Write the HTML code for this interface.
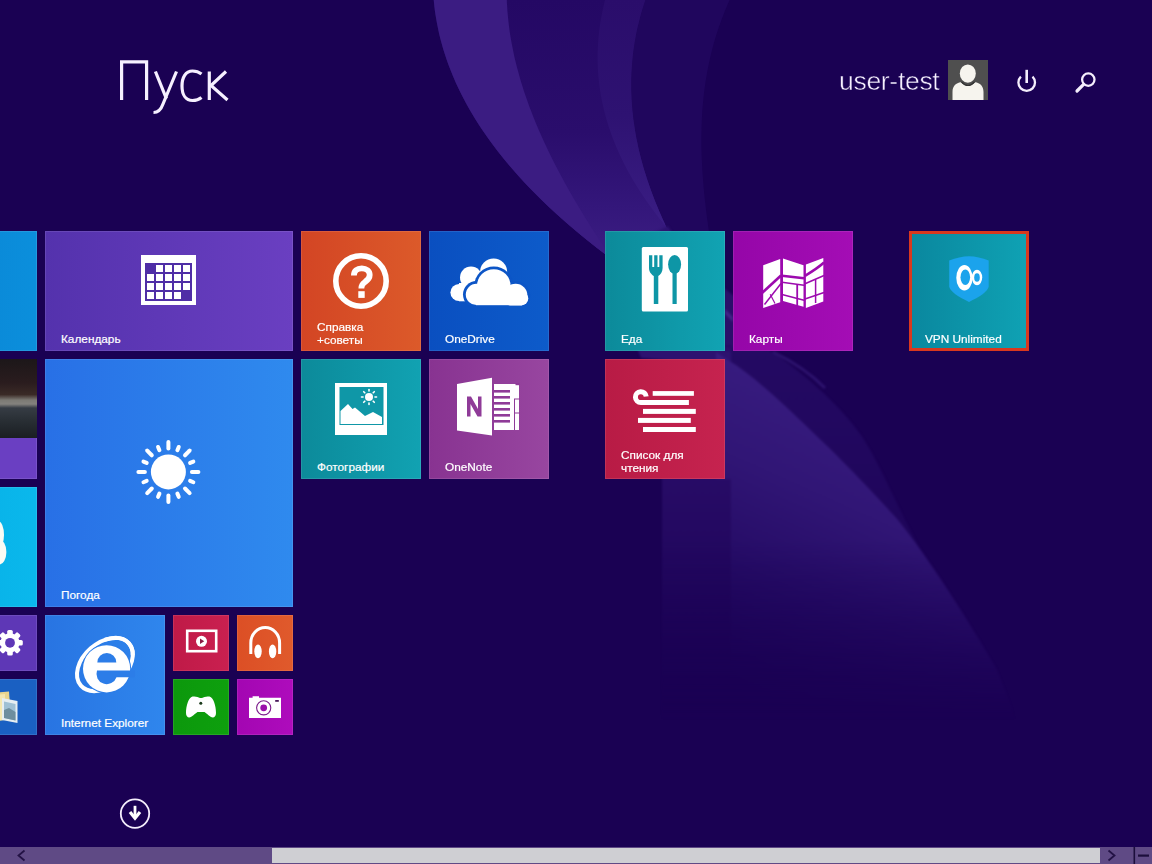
<!DOCTYPE html>
<html><head><meta charset="utf-8">
<style>
html,body{margin:0;padding:0;width:1152px;height:864px;overflow:hidden;background:#1a0153;}
body{position:relative;font-family:"Liberation Sans",sans-serif;}
.bg{position:absolute;left:0;top:0;width:1152px;height:864px;}
.t{position:absolute;overflow:hidden;box-sizing:border-box;box-shadow:inset 0 0 0 1px rgba(255,255,255,0.10);}
.lbl{position:absolute;left:16px;color:#fff;font-size:11.8px;line-height:13px;white-space:nowrap;-webkit-text-stroke:0.2px #fff;}
.ic{position:absolute;left:0;top:0;}
</style></head><body>
<svg width="0" height="0" style="position:absolute;left:0;top:0">
 <defs>
  <linearGradient id="fadev" gradientUnits="userSpaceOnUse" x1="0" y1="540" x2="0" y2="720"><stop offset="0" stop-color="#fff"/><stop offset="1" stop-color="#000"/></linearGradient>
  <mask id="lowmask" maskUnits="userSpaceOnUse" x="0" y="0" width="1152" height="864"><rect x="0" y="0" width="1152" height="864" fill="url(#fadev)"/></mask>
  <linearGradient id="lowg" gradientUnits="userSpaceOnUse" x1="850" y1="400" x2="720" y2="690">
   <stop offset="0" stop-color="#381c80"/>
   <stop offset="0.3" stop-color="#311676"/>
   <stop offset="0.6" stop-color="#260c67"/>
   <stop offset="0.85" stop-color="#1e055b"/>
   <stop offset="1" stop-color="#1a0153"/>
  </linearGradient>
  <linearGradient id="lowo" gradientUnits="userSpaceOnUse" x1="0" y1="350" x2="0" y2="700">
   <stop offset="0" stop-color="#240a63"/>
   <stop offset="1" stop-color="#1a0153"/>
  </linearGradient>
  <linearGradient id="lowf" gradientUnits="userSpaceOnUse" x1="0" y1="470" x2="0" y2="700">
   <stop offset="0" stop-color="#280c67"/>
   <stop offset="0.4" stop-color="#22075f"/>
   <stop offset="1" stop-color="#1a0153"/>
  </linearGradient>
 </defs>
</svg>
<svg class="bg" width="1152" height="864" viewBox="0 0 1152 864" style="filter:blur(0.6px)">

 <g>
  <linearGradient id="a2g" gradientUnits="userSpaceOnUse" x1="0" y1="0" x2="0" y2="240"><stop offset="0" stop-color="#240864"/><stop offset="0.55" stop-color="#2a0d6c"/><stop offset="0.85" stop-color="#33167a"/><stop offset="1" stop-color="#391b80"/></linearGradient>
  <path d="M647.0,-5.0 L645.6,-1.0 L644.3,3.0 L643.0,7.0 L641.8,11.0 L640.6,15.0 L639.6,19.0 L638.6,23.0 L637.6,27.0 L636.7,31.0 L635.9,35.0 L635.2,39.0 L634.5,43.0 L633.9,47.0 L633.3,51.0 L632.8,55.0 L632.4,59.0 L632.1,63.0 L631.8,67.0 L631.5,71.0 L631.3,75.0 L631.2,79.0 L631.2,83.0 L631.2,87.0 L631.2,91.0 L631.4,95.0 L631.5,99.0 L631.8,103.0 L632.1,107.0 L632.4,111.0 L632.9,115.0 L633.3,119.0 L633.9,123.0 L634.5,127.0 L635.1,131.0 L635.8,135.0 L636.5,139.0 L637.4,143.0 L638.2,147.0 L639.1,151.0 L640.1,155.0 L641.1,159.0 L642.2,163.0 L643.3,167.0 L644.5,171.0 L645.8,175.0 L647.0,179.0 L648.4,183.0 L649.8,187.0 L651.2,191.0 L652.7,195.0 L654.2,199.0 L655.8,203.0 L657.5,207.0 L659.1,211.0 L660.9,215.0 L662.6,219.0 L664.5,223.0 L666.3,227.0 L668.3,231.0 L670.2,235.0 L672.2,239.0 L674.3,243.0 L676.4,247.0 L678.5,251.0 L680.7,255.0 L682.9,259.0 L685.2,263.0 L687.5,267.0 L689.9,271.0 L692.3,275.0 L694.7,279.0 L697.2,283.0 L699.8,287.0 L702.3,291.0 L704.9,295.0 L707.6,299.0 L708.2,300.0 L720.1,300.0 L720.0,299.0 L719.3,295.0 L718.6,291.0 L717.9,287.0 L717.2,283.0 L716.6,279.0 L715.9,275.0 L715.2,271.0 L714.5,267.0 L713.9,263.0 L713.2,259.0 L712.6,255.0 L711.9,251.0 L711.3,247.0 L710.7,243.0 L710.1,239.0 L709.5,235.0 L708.9,231.0 L708.3,227.0 L707.8,223.0 L707.2,219.0 L706.7,215.0 L706.2,211.0 L705.7,207.0 L705.3,203.0 L704.8,199.0 L704.4,195.0 L704.0,191.0 L703.6,187.0 L703.3,183.0 L703.0,179.0 L702.7,175.0 L702.4,171.0 L702.2,167.0 L702.0,163.0 L701.8,159.0 L701.6,155.0 L701.5,151.0 L701.4,147.0 L701.4,143.0 L701.4,139.0 L701.4,135.0 L701.5,131.0 L701.6,127.0 L701.7,123.0 L701.9,119.0 L702.1,115.0 L702.3,111.0 L702.6,107.0 L703.0,103.0 L703.4,99.0 L703.8,95.0 L704.3,91.0 L704.8,87.0 L705.4,83.0 L706.0,79.0 L706.7,75.0 L707.4,71.0 L708.2,67.0 L709.0,63.0 L709.9,59.0 L710.8,55.0 L711.8,51.0 L712.8,47.0 L713.9,43.0 L715.1,39.0 L716.3,35.0 L717.6,31.0 L718.9,27.0 L720.4,23.0 L721.8,19.0 L723.4,15.0 L724.9,11.0 L726.6,7.0 L728.3,3.0 L730.1,-1.0 L732.0,-5.0 Z" fill="#20065d"/>
  <path d="M433.3,-5.0 L433.6,-1.0 L434.0,3.0 L434.4,7.0 L434.9,11.0 L435.5,15.0 L436.2,19.0 L436.9,23.0 L437.7,27.0 L438.5,31.0 L439.4,35.0 L440.4,39.0 L441.5,43.0 L442.6,47.0 L443.8,51.0 L445.1,55.0 L446.4,59.0 L447.8,63.0 L449.3,67.0 L450.9,71.0 L452.5,75.0 L454.2,79.0 L455.9,83.0 L457.8,87.0 L459.7,91.0 L461.7,95.0 L463.8,99.0 L465.9,103.0 L468.1,107.0 L470.4,111.0 L472.8,115.0 L475.2,119.0 L477.7,123.0 L480.3,127.0 L483.0,131.0 L485.8,135.0 L488.6,139.0 L491.5,143.0 L494.5,147.0 L497.5,151.0 L500.7,155.0 L503.9,159.0 L507.2,163.0 L510.6,167.0 L514.1,171.0 L517.6,175.0 L521.2,179.0 L524.9,183.0 L528.7,187.0 L532.6,191.0 L536.6,195.0 L540.6,199.0 L544.7,203.0 L548.9,207.0 L553.2,211.0 L557.6,215.0 L562.1,219.0 L566.6,223.0 L571.3,227.0 L576.0,231.0 L580.8,235.0 L585.7,239.0 L590.7,243.0 L595.7,247.0 L600.9,251.0 L606.2,255.0 L611.5,259.0 L616.9,263.0 L622.4,267.0 L628.0,271.0 L633.7,275.0 L639.5,279.0 L645.4,283.0 L651.4,287.0 L657.4,291.0 L663.6,295.0 L669.8,299.0 L671.4,300.0 L708.2,300.0 L707.6,299.0 L704.9,295.0 L702.3,291.0 L699.8,287.0 L697.2,283.0 L694.7,279.0 L692.3,275.0 L689.9,271.0 L687.5,267.0 L685.2,263.0 L682.9,259.0 L680.7,255.0 L678.5,251.0 L676.4,247.0 L674.3,243.0 L672.2,239.0 L670.2,235.0 L668.3,231.0 L666.3,227.0 L664.5,223.0 L662.6,219.0 L660.9,215.0 L659.1,211.0 L657.5,207.0 L655.8,203.0 L654.2,199.0 L652.7,195.0 L651.2,191.0 L649.8,187.0 L648.4,183.0 L647.0,179.0 L645.8,175.0 L644.5,171.0 L643.3,167.0 L642.2,163.0 L641.1,159.0 L640.1,155.0 L639.1,151.0 L638.2,147.0 L637.4,143.0 L636.5,139.0 L635.8,135.0 L635.1,131.0 L634.5,127.0 L633.9,123.0 L633.3,119.0 L632.9,115.0 L632.4,111.0 L632.1,107.0 L631.8,103.0 L631.5,99.0 L631.4,95.0 L631.2,91.0 L631.2,87.0 L631.2,83.0 L631.2,79.0 L631.3,75.0 L631.5,71.0 L631.8,67.0 L632.1,63.0 L632.4,59.0 L632.8,55.0 L633.3,51.0 L633.9,47.0 L634.5,43.0 L635.2,39.0 L635.9,35.0 L636.7,31.0 L637.6,27.0 L638.6,23.0 L639.6,19.0 L640.6,15.0 L641.8,11.0 L643.0,7.0 L644.3,3.0 L645.6,-1.0 L647.0,-5.0 Z" fill="url(#a2g)"/>
  <linearGradient id="a2sg" gradientUnits="userSpaceOnUse" x1="0" y1="0" x2="0" y2="232"><stop offset="0" stop-color="#2a0d6b"/><stop offset="0.5" stop-color="#2e1272"/><stop offset="1" stop-color="#3b1e85"/></linearGradient>
  <path d="M606.4,-5.0 L605.3,-1.0 L604.3,3.0 L603.4,7.0 L602.5,11.0 L601.7,15.0 L601.0,19.0 L600.3,23.0 L599.7,27.0 L599.2,31.0 L598.8,35.0 L598.4,39.0 L598.1,43.0 L597.9,47.0 L597.7,51.0 L597.6,55.0 L597.6,59.0 L597.7,63.0 L597.8,67.0 L598.0,71.0 L598.3,75.0 L598.7,79.0 L599.1,83.0 L599.6,87.0 L600.2,91.0 L600.8,95.0 L601.6,99.0 L602.4,103.0 L603.3,107.0 L604.2,111.0 L605.3,115.0 L606.4,119.0 L607.6,123.0 L608.8,127.0 L610.2,131.0 L611.6,135.0 L613.1,139.0 L614.7,143.0 L616.3,147.0 L618.1,151.0 L619.9,155.0 L621.8,159.0 L623.7,163.0 L625.8,167.0 L627.9,171.0 L630.1,175.0 L632.4,179.0 L634.8,183.0 L637.3,187.0 L639.8,191.0 L642.4,195.0 L645.1,199.0 L647.9,203.0 L650.7,207.0 L653.7,211.0 L656.7,215.0 L659.8,219.0 L663.0,223.0 L666.3,227.0 L669.6,231.0 L673.1,235.0 L676.6,239.0 L677.5,240.0 L672.7,240.0 L672.2,239.0 L670.2,235.0 L668.3,231.0 L666.3,227.0 L664.5,223.0 L662.6,219.0 L660.9,215.0 L659.1,211.0 L657.5,207.0 L655.8,203.0 L654.2,199.0 L652.7,195.0 L651.2,191.0 L649.8,187.0 L648.4,183.0 L647.0,179.0 L645.8,175.0 L644.5,171.0 L643.3,167.0 L642.2,163.0 L641.1,159.0 L640.1,155.0 L639.1,151.0 L638.2,147.0 L637.4,143.0 L636.5,139.0 L635.8,135.0 L635.1,131.0 L634.5,127.0 L633.9,123.0 L633.3,119.0 L632.9,115.0 L632.4,111.0 L632.1,107.0 L631.8,103.0 L631.5,99.0 L631.4,95.0 L631.2,91.0 L631.2,87.0 L631.2,83.0 L631.2,79.0 L631.3,75.0 L631.5,71.0 L631.8,67.0 L632.1,63.0 L632.4,59.0 L632.8,55.0 L633.3,51.0 L633.9,47.0 L634.5,43.0 L635.2,39.0 L635.9,35.0 L636.7,31.0 L637.6,27.0 L638.6,23.0 L639.6,19.0 L640.6,15.0 L641.8,11.0 L643.0,7.0 L644.3,3.0 L645.6,-1.0 L647.0,-5.0 Z" fill="url(#a2sg)"/>
  <path d="M433.3,-5.0 L433.6,-1.0 L434.0,3.0 L434.4,7.0 L434.9,11.0 L435.5,15.0 L436.2,19.0 L436.9,23.0 L437.7,27.0 L438.5,31.0 L439.4,35.0 L440.4,39.0 L441.5,43.0 L442.6,47.0 L443.8,51.0 L445.1,55.0 L446.4,59.0 L447.8,63.0 L449.3,67.0 L450.9,71.0 L452.5,75.0 L454.2,79.0 L455.9,83.0 L457.8,87.0 L459.7,91.0 L461.7,95.0 L463.8,99.0 L465.9,103.0 L468.1,107.0 L470.4,111.0 L472.8,115.0 L475.2,119.0 L477.7,123.0 L480.3,127.0 L483.0,131.0 L485.8,135.0 L488.6,139.0 L491.5,143.0 L494.5,147.0 L497.5,151.0 L500.7,155.0 L503.9,159.0 L507.2,163.0 L510.6,167.0 L514.1,171.0 L517.6,175.0 L521.2,179.0 L524.9,183.0 L528.7,187.0 L532.6,191.0 L536.6,195.0 L540.6,199.0 L544.7,203.0 L548.9,207.0 L553.2,211.0 L557.6,215.0 L562.1,219.0 L566.6,223.0 L571.3,227.0 L576.0,231.0 L580.8,235.0 L585.7,239.0 L590.7,243.0 L595.7,247.0 L600.9,251.0 L606.2,255.0 L611.5,259.0 L613.5,260.5 L613.3,260.5 L612.3,259.0 L609.5,255.0 L606.8,251.0 L604.2,247.0 L601.5,243.0 L598.9,239.0 L596.3,235.0 L593.7,231.0 L591.1,227.0 L588.6,223.0 L586.1,219.0 L583.6,215.0 L581.2,211.0 L578.8,207.0 L576.4,203.0 L574.0,199.0 L571.7,195.0 L569.4,191.0 L567.2,187.0 L564.9,183.0 L562.8,179.0 L560.6,175.0 L558.5,171.0 L556.4,167.0 L554.3,163.0 L552.3,159.0 L550.3,155.0 L548.4,151.0 L546.5,147.0 L544.6,143.0 L542.8,139.0 L541.0,135.0 L539.2,131.0 L537.5,127.0 L535.8,123.0 L534.2,119.0 L532.6,115.0 L531.1,111.0 L529.5,107.0 L528.1,103.0 L526.7,99.0 L525.3,95.0 L523.9,91.0 L522.7,87.0 L521.4,83.0 L520.2,79.0 L519.1,75.0 L518.0,71.0 L516.9,67.0 L515.9,63.0 L514.9,59.0 L514.0,55.0 L513.2,51.0 L512.4,47.0 L511.6,43.0 L510.9,39.0 L510.2,35.0 L509.6,31.0 L509.1,27.0 L508.6,23.0 L508.2,19.0 L507.8,15.0 L507.4,11.0 L507.2,7.0 L506.9,3.0 L506.8,-1.0 L506.7,-5.0 Z" fill="#3b1c82"/>
 </g>

</svg>
<svg class="bg" width="1152" height="864" viewBox="0 0 1152 864" style="filter:blur(1.2px)">
 <g mask="url(#lowmask)">
    <path d="M606,255 L668,226 C690,260 715,320 745,352 L760,362 L690,362 L641,358 C630,330 615,290 606,255 Z" fill="#2d1270"/>
  <path d="M724,288 L734,296 L740,352 L724,352 Z" fill="#2a0e6a"/>
  <path d="M725,309 L733,317 L733,322 L725,314 Z" fill="#4a2a90" opacity="0.8"/>
  <!-- faint vertical band -->
  <path d="M662,470 L731,470 L731,740 L662,740 Z" fill="url(#lowf)"/>
  <!-- outer band lower -->
  <path d="M700,345 L769,350 C800,370 840,405 860,434 C875,455 890,490 905,520 C930,570 970,640 1000,700 L731,740 L731,345 Z" fill="url(#lowo)"/>
  <!-- bright band lower -->
  <path d="M716,352 L731,362 C760,380 800,420 825,444 C850,468 880,500 898,520 C930,560 965,615 996,668 C1010,700 1020,730 1025,760 L731,760 L731,479 L716,479 Z" fill="url(#lowg)"/>
  <path d="M773,352 C800,365 815,378 825,388" stroke="#3a2080" stroke-width="3" fill="none" opacity="0.6"/>
 </g>
</svg>

<!-- header -->
<svg style="position:absolute;left:0;top:0" width="260" height="130">
 <g fill="none" stroke="#f6f0ff" stroke-width="3.2">
  <path d="M121.6,100 V61.8 H146.6 V100"/>
  <path d="M155.4,71.5 L166.4,98.6"/>
  <path d="M176.5,71.5 L163,104 Q160,112.5 153.5,112.5"/>
  <path d="M201.5,74 C199,72 196,71 192.5,71 C185.5,71 182,77.5 182,86 C182,95 186,100.5 192.5,100.5 C196,100.5 199,99.5 201.5,97.5"/>
  <path d="M209.3,71.5 V100"/>
  <path d="M226,71.5 L211,85.5 L227.5,100"/>
 </g>
</svg>
<div style="position:absolute;left:839px;top:65.5px;font-size:26.5px;line-height:30px;letter-spacing:-0.3px;color:#f6f0ff;-webkit-text-stroke:0.5px #1a0153;white-space:nowrap">user-test</div>
<!-- ===== tiles ===== -->
<!-- left partial column -->
<div class="t" style="left:-83px;top:231px;width:120px;height:120px;background:linear-gradient(90deg,#0a82d2,#0b8fdc)"></div>
<div class="t" style="left:-83px;top:359px;width:120px;height:120px;background:#6a3fc2">
  <div style="position:absolute;left:0;top:0;width:120px;height:79px;background:linear-gradient(180deg,#1c1719 0%,#2a1c1e 30%,#3a2a26 45%,#7c7a74 52%,#84827e 57%,#363c44 62%,#2a3036 76%,#1a1e22 100%)"></div>
</div>
<div class="t" style="left:-83px;top:487px;width:120px;height:120px;background:linear-gradient(90deg,#07ace4,#0ab8ec)">
  <svg class="ic" width="120" height="120"><g fill="#fbfbf4"><ellipse cx="81" cy="48" rx="6" ry="14"/><ellipse cx="82" cy="65" rx="7.4" ry="12.6"/></g></svg>
</div>
<div class="t" style="left:-19px;top:615px;width:56px;height:56px;background:#5e37b6">
  <svg class="ic" width="56" height="56"><g transform="translate(29,27.8)" fill="#fff"><circle r="9.6"/><rect x="-2.8" y="-12.8" width="5.6" height="6" rx="1.6" transform="rotate(0)"/><rect x="-2.8" y="-12.8" width="5.6" height="6" rx="1.6" transform="rotate(45)"/><rect x="-2.8" y="-12.8" width="5.6" height="6" rx="1.6" transform="rotate(90)"/><rect x="-2.8" y="-12.8" width="5.6" height="6" rx="1.6" transform="rotate(135)"/><rect x="-2.8" y="-12.8" width="5.6" height="6" rx="1.6" transform="rotate(180)"/><rect x="-2.8" y="-12.8" width="5.6" height="6" rx="1.6" transform="rotate(225)"/><rect x="-2.8" y="-12.8" width="5.6" height="6" rx="1.6" transform="rotate(270)"/><rect x="-2.8" y="-12.8" width="5.6" height="6" rx="1.6" transform="rotate(315)"/><circle r="4.9" fill="#5e37b6"/></g></svg>
</div>
<div class="t" style="left:-19px;top:679px;width:56px;height:56px;background:#1a60c2">
  <svg class="ic" width="56" height="56">
   <path d="M8,14 L28,12.5 L30,40 L8,43 Z" fill="#e9d58e"/>
   <path d="M14,16 L24,15 L24,41 L14,42 Z" fill="#f4e7b0"/>
   <path d="M21,19 L36.5,22 L36.5,44 L21,41 Z" fill="#e6eef2"/>
   <path d="M23,22.5 L34.5,25 L34.5,41.5 L23,39 Z" fill="#9fc0d4"/>
   <path d="M23,31 L28,29 L34.5,33 L34.5,41.5 L23,39 Z" fill="#6e8e9e"/>
   </svg>
</div>

<!-- group 1 -->
<div class="t" style="left:45px;top:231px;width:248px;height:120px;background:linear-gradient(90deg,#5432ad,#6a3fc1)">
  <svg class="ic" width="248" height="120">
   <rect x="96" y="24" width="55" height="50" fill="#fff"/>
   <rect x="100" y="32" width="47" height="38" fill="#4f2ea6"/>
   <g fill="#fff"><rect x="111" y="34" width="7" height="7"/><rect x="120" y="34" width="7" height="7"/><rect x="129" y="34" width="7" height="7"/><rect x="138" y="34" width="7" height="7"/><rect x="102" y="43" width="7" height="7"/><rect x="111" y="43" width="7" height="7"/><rect x="120" y="43" width="7" height="7"/><rect x="129" y="43" width="7" height="7"/><rect x="138" y="43" width="7" height="7"/><rect x="102" y="52" width="7" height="7"/><rect x="111" y="52" width="7" height="7"/><rect x="120" y="52" width="7" height="7"/><rect x="129" y="52" width="7" height="7"/><rect x="138" y="52" width="7" height="7"/><rect x="102" y="61" width="7" height="7"/><rect x="111" y="61" width="7" height="7"/><rect x="120" y="61" width="7" height="7"/><rect x="129" y="61" width="7" height="7"/></g>
  </svg>
  <div class="lbl" style="top:101.7px">Календарь</div>
</div>
<div class="t" style="left:301px;top:231px;width:120px;height:120px;background:linear-gradient(90deg,#d34524,#dc5a2a)">
  <svg class="ic" width="120" height="120">
   <circle cx="60" cy="50" r="25.2" fill="none" stroke="#fff" stroke-width="5.6"/>
   <path d="M52.9,44.5 C52.9,40 56,37.3 60.8,37.3 C65.5,37.3 68.7,40.2 68.7,44 C68.7,47.5 66.5,49.3 64,51 C61.5,52.8 60.4,54 60.4,57 V57.6" fill="none" stroke="#fff" stroke-width="5.8"/>
   <rect x="57.3" y="60.2" width="6.4" height="6.7" fill="#fff"/>
  </svg>
  <div class="lbl" style="top:89.6px;line-height:13.3px">Справка<br>+советы</div>
</div>
<div class="t" style="left:429px;top:231px;width:120px;height:120px;background:linear-gradient(90deg,#0a4fc0,#0d5bca)">
  <svg class="ic" width="120" height="120">
   <defs><clipPath id="odc"><rect x="0" y="0" width="120" height="74.4"/></clipPath><clipPath id="odb"><rect x="0" y="0" width="120" height="70.5"/></clipPath></defs>
   <g fill="#fff" clip-path="url(#odb)">
    <circle cx="30" cy="61.5" r="8.6"/><circle cx="42" cy="46.5" r="11"/><circle cx="64.6" cy="41" r="13.6"/>
    <rect x="30" y="52" width="40" height="18.6"/>
   </g>
   <g clip-path="url(#odc)"><g fill="#0c55c6">
    <circle cx="47.4" cy="63.4" r="13.4"/><circle cx="64.8" cy="55" r="19.6"/><circle cx="86.6" cy="64.6" r="14.6"/>
    <rect x="47" y="60" width="42" height="17.3"/>
   </g>
   <g fill="#fff">
    <circle cx="47.4" cy="63.4" r="10.6"/><circle cx="64.8" cy="55" r="16.8"/><circle cx="86.6" cy="64.6" r="11.8"/><circle cx="92.5" cy="67.5" r="6.8"/>
    <rect x="47" y="60" width="46" height="14.4"/>
   </g></g>
  </svg>
  <div class="lbl" style="top:101.7px">OneDrive</div>
</div>
<div class="t" style="left:301px;top:359px;width:120px;height:120px;background:linear-gradient(90deg,#0c8a9a,#11a2b2)">
  <svg class="ic" width="120" height="120">
   <rect x="34" y="24" width="52" height="52" fill="#fff"/>
   <rect x="38.5" y="28" width="44" height="38" fill="#0f97a7"/>
   <path d="M39.5,65 L39.5,52 L47,45 L51.5,50 L54,48.5 L64,57 L72,53 L81,58 L81,65 Z" fill="#fff"/>
   <circle cx="68" cy="38" r="4" fill="#fff"/>
   <g stroke="#fff" stroke-width="1.6" stroke-linecap="round">
    <path d="M68,30.5 V32"/><path d="M68,44 V45.5"/><path d="M60.5,38 H62"/><path d="M74,38 H75.5"/>
    <path d="M62.7,32.7 L63.8,33.8"/><path d="M72.2,42.2 L73.3,43.3"/><path d="M62.7,43.3 L63.8,42.2"/><path d="M72.2,33.8 L73.3,32.7"/>
   </g>
  </svg>
  <div class="lbl" style="top:101.7px">Фотографии</div>
</div>
<div class="t" style="left:429px;top:359px;width:120px;height:120px;background:linear-gradient(90deg,#883391,#9846a0)">
  <svg class="ic" width="120" height="120">
   <rect x="65" y="25" width="25" height="46" fill="#fff"/>
   <g fill="#8f3b98"><rect x="65" y="31" width="16" height="2.6"/><rect x="65" y="37" width="16" height="2.6"/><rect x="65" y="43" width="16" height="2.6"/><rect x="65" y="49" width="16" height="2.6"/><rect x="65" y="55" width="16" height="2.6"/><rect x="65" y="61" width="16" height="2.6"/>
   <rect x="85" y="40" width="1" height="31"/><rect x="85" y="39.5" width="6" height="1"/><rect x="85" y="53.5" width="6" height="1"/><rect x="86.5" y="24" width="4" height="2.2"/></g>
   <path d="M28,25 L63,18.7 L63,76.4 L28,71.5 Z" fill="#fff"/>
   <path d="M38,57.5 V37.5 H42 L49,50 V37.5 H52.5 V57.5 H48.5 L41.5,45 V57.5 Z" fill="#8f3b98"/>
  </svg>
  <div class="lbl" style="top:101.7px">OneNote</div>
</div>
<div class="t" style="left:45px;top:359px;width:248px;height:248px;background:linear-gradient(90deg,#2870e6,#2f8aee)">
  <svg class="ic" width="248" height="248"><g transform="translate(123.4,112.9)">
   <circle r="17.5" fill="#fff"/>
   <g stroke="#fff" stroke-width="4" stroke-linecap="round"><path d="M0.00,-23.50 L0.00,-30.00"/><path d="M8.99,-21.71 L10.33,-24.94"/><path d="M16.62,-16.62 L21.21,-21.21"/><path d="M21.71,-8.99 L24.94,-10.33"/><path d="M23.50,-0.00 L30.00,-0.00"/><path d="M21.71,8.99 L24.94,10.33"/><path d="M16.62,16.62 L21.21,21.21"/><path d="M8.99,21.71 L10.33,24.94"/><path d="M0.00,23.50 L0.00,30.00"/><path d="M-8.99,21.71 L-10.33,24.94"/><path d="M-16.62,16.62 L-21.21,21.21"/><path d="M-21.71,8.99 L-24.94,10.33"/><path d="M-23.50,0.00 L-30.00,0.00"/><path d="M-21.71,-8.99 L-24.94,-10.33"/><path d="M-16.62,-16.62 L-21.21,-21.21"/><path d="M-8.99,-21.71 L-10.33,-24.94"/></g>
  </g></svg>
  <div class="lbl" style="top:229.7px">Погода</div>
</div>
<div class="t" style="left:45px;top:615px;width:120px;height:120px;background:linear-gradient(90deg,#2874e2,#2f86ed)">
  <svg class="ic" width="120" height="120">
   <g transform="translate(59.9,49.5) rotate(-41.4)">
    <ellipse cx="0" cy="0" rx="32" ry="21.5" fill="none" stroke="#fff" stroke-width="4"/>
   </g>
   <circle cx="61.6" cy="53.8" r="24.6" fill="#2c7de8"/>
   <circle cx="61.6" cy="53.8" r="23.6" fill="#fff"/>
   <path d="M52.3,47.5 A9.5,9.5 0 0 1 71.3,47.5 Z" fill="#2c7de8"/>
   <path d="M52,55.5 H90 V62.2 H71.5 A9.8,9.8 0 0 1 52,55.5 Z" fill="#2c7de8"/>
   <g transform="translate(59.9,49.5) rotate(-41.4)" >
    <path d="M16,-18.6 A32,21.5 0 0 1 32,0 A32,21.5 0 0 1 27,11.5" fill="none" stroke="#fff" stroke-width="4"/>
   </g>
  </svg>
  <div class="lbl" style="top:101.7px">Internet Explorer</div>
</div>
<div class="t" style="left:173px;top:615px;width:56px;height:56px;background:linear-gradient(90deg,#bf1a47,#ca2050)">
  <svg class="ic" width="56" height="56">
   <rect x="14.2" y="15.8" width="29" height="20.4" fill="none" stroke="#fff" stroke-width="2.6"/>
   <circle cx="28.5" cy="26.3" r="5.5" fill="#fff"/>
   <path d="M27,23.6 L31.2,26.3 L27,29 Z" fill="#8a1c44"/>
  </svg>
</div>
<div class="t" style="left:237px;top:615px;width:56px;height:56px;background:linear-gradient(90deg,#dc4f25,#e05a2c)">
  <svg class="ic" width="56" height="56">
   <path d="M13.8,39 V28 A14.4,15.5 0 0 1 42.6,28 V39" fill="none" stroke="#fff" stroke-width="3"/>
   <ellipse cx="21" cy="36.4" rx="3.7" ry="6.9" fill="#fff"/>
   <ellipse cx="35.6" cy="36.4" rx="3.7" ry="6.9" fill="#fff"/>
   </svg>
</div>
<div class="t" style="left:173px;top:679px;width:56px;height:56px;background:linear-gradient(90deg,#0c980c,#0ea00e)">
  <svg class="ic" width="56" height="56">
   <path d="M19.5,17.6 C22.5,17 25,18 27,19 L29,19 C31,18 33.5,17 36.5,17.6 C40.5,18.6 43,27 43,34 C43,37 41.5,38.4 39.8,38.4 C37,38.4 34,34.5 31.5,33 L24.5,33 C22,34.5 19,38.4 16.2,38.4 C14.5,38.4 13,37 13,34 C13,27 15.5,18.6 19.5,17.6 Z" fill="#fff"/>
   <circle cx="27.8" cy="24.2" r="1.5" fill="#1a3a1a"/>
   </svg>
</div>
<div class="t" style="left:237px;top:679px;width:56px;height:56px;background:linear-gradient(90deg,#a306b2,#ae0cbc)">
  <svg class="ic" width="56" height="56">
   <path d="M12,18.8 H15.6 V17.2 H22 V18.8 H44 V38.9 H12 Z" fill="#fff"/>
   <circle cx="26.7" cy="28.8" r="7.1" fill="#fff" stroke="#7a1a8a" stroke-width="1.1"/>
   <circle cx="26.7" cy="28.8" r="3.4" fill="#9a0eaa"/>
   <rect x="38.2" y="21" width="3.6" height="1.8" fill="#4a1a5a"/>
   </svg>
</div>

<!-- group 2 -->
<div class="t" style="left:605px;top:231px;width:120px;height:120px;background:linear-gradient(90deg,#0c8a9a,#11a3b3)">
  <svg class="ic" width="120" height="120">
   <rect x="36.8" y="16" width="46.2" height="64.5" rx="1.5" fill="#fff"/>
   <g fill="#0e96a6">
    <path d="M44,24.3 H47.3 V36 H49.2 V24.3 H52.5 V36 H54.3 V24.3 H57.6 V37 C57.6,41 55.5,43.5 53.3,45 V73 H48.8 V45 C46.5,43.5 44,41 44,37 Z"/>
    <ellipse cx="69.6" cy="33.5" rx="6.5" ry="9.6"/>
    <rect x="67.5" y="40" width="4.2" height="33"/>
   </g>
  </svg>
  <div class="lbl" style="top:101.7px">Еда</div>
</div>
<div class="t" style="left:733px;top:231px;width:120px;height:120px;background:linear-gradient(90deg,#9506a8,#a40db5)">
  <svg class="ic" width="120" height="120">
   <g fill="#fff">
    <path d="M30.2,34.2 L47.2,27.9 L47.2,71.3 L30.2,76.9 Z"/>
    <path d="M50,27.6 L70.5,34.2 L70.5,75.8 L50,70 Z"/>
    <path d="M72.9,33.5 L90.3,26.9 L90.3,70.6 L72.9,76.9 Z"/>
   </g>
   <g stroke="#9c0aae" fill="none">
    <path d="M29,62 L48,44.5" stroke-width="2.6"/>
    <path d="M49,44.8 L71,47.2" stroke-width="2.6"/>
    <path d="M72,44.8 C80,40 86,36 91,31.5" stroke-width="2.6"/>
    <path d="M31.5,73.5 L48,52.5" stroke-width="1.5"/>
    <path d="M37.2,63.2 L42,72.5" stroke-width="1.2"/>
    <path d="M49,51.2 L71,54.2" stroke-width="1.6"/>
    <path d="M49,63.6 L71,69.3" stroke-width="1.6"/>
    <path d="M64.2,53.5 V77" stroke-width="1.8"/>
    <path d="M72,52.8 L91,44.6" stroke-width="1.6"/>
    <path d="M72,68 L91,61.4" stroke-width="1.6"/>
    <path d="M82.6,48.5 V72" stroke-width="1.5"/>
   </g>
  </svg>
  <div class="lbl" style="top:101.7px">Карты</div>
</div>
<div class="t" style="left:605px;top:359px;width:120px;height:120px;background:linear-gradient(90deg,#b81b45,#c6234f)">
  <svg class="ic" width="120" height="120">
   <g fill="#fff">
    <rect x="47.7" y="32.1" width="41.2" height="4.7"/>
    <rect x="38" y="49.9" width="52.8" height="5"/>
    <rect x="33" y="58.9" width="52.8" height="5"/>
    <rect x="38" y="68" width="52.8" height="5"/>
   </g>
   <path d="M41.2,37.6 A5.4,5.4 0 1 0 35.8,43.5 H83.9" fill="none" stroke="#fff" stroke-width="5"/>
  </svg>
  <div class="lbl" style="top:89.6px;line-height:13.3px">Список для<br>чтения</div>
</div>

<!-- group 3 -->
<div class="t" style="left:909px;top:231px;width:120px;height:120px;background:linear-gradient(90deg,#0a879e,#0fa2b4);box-shadow:inset 0 0 0 3px #d8381e">
  <svg class="ic" width="120" height="120">
   <path d="M40.2,29.4 C47,27 53.5,25.3 60,25.2 C66.5,25.3 73,27 79.7,29.4 L79.7,55.3 C79.7,60 70,66.5 60,70.9 C50,66.5 40.2,60 40.2,55.3 Z" fill="#1ba3ec"/>
   <ellipse cx="55.4" cy="46.7" rx="8.1" ry="12.8" fill="#fff"/>
   <ellipse cx="56.3" cy="46.3" rx="4.8" ry="7.8" fill="#1ba3ec"/>
   <ellipse cx="68" cy="46.5" rx="5.2" ry="7.8" fill="#fff"/>
   <ellipse cx="68" cy="46.5" rx="2.8" ry="4.3" fill="#1ba3ec"/>
   </svg>
  <div class="lbl" style="top:101.7px">VPN Unlimited</div>
</div>

<!-- avatar / power / search -->
<svg style="position:absolute;left:940px;top:55px" width="170" height="50">
 <rect x="8" y="5" width="40" height="40" fill="#4f4f4f"/>
 <path d="M12.5,45 V37 C12.5,31 16,28 21,27.3 C23,29.5 25,30.8 28,30.8 C31,30.8 33,29.5 35,27.3 C40,28 43.5,31 43.5,37 V45 Z" fill="#f6f4ee"/>
 <ellipse cx="27.8" cy="18.6" rx="8" ry="9.2" fill="#f6f4ee"/>
 <path d="M21.5,27 C24,29.8 26,30.5 28,30.5 C30,30.5 32,29.8 34.5,27" fill="none" stroke="#333" stroke-width="1.2"/>
 <g fill="none" stroke="#f4eefc" stroke-width="2.3">
  <path d="M80.9,21.6 A8.3,8.3 0 1 0 92.5,21.6"/>
  <path d="M86.7,14.8 V28" stroke-width="2.6"/>
  <circle cx="148.3" cy="24.6" r="6.2"/>
  <path d="M143.6,29.4 L137,36" stroke-width="3.2" stroke-linecap="round"/>
 </g>
</svg>
<!-- down arrow -->
<svg style="position:absolute;left:110px;top:790px" width="50" height="50">
 <circle cx="25" cy="23.6" r="14.2" fill="none" stroke="#f4eefc" stroke-width="1.8"/>
 <path d="M25,15.8 V28" stroke="#fff" stroke-width="2.8"/>
 <path d="M20,22 L25,28.2 L30,22" fill="none" stroke="#fff" stroke-width="3.2" stroke-linejoin="miter"/>
</svg>
<!-- scrollbar -->
<div style="position:absolute;left:0;top:847px;width:1152px;height:17px;background:#5f4a85"></div>
<div style="position:absolute;left:272px;top:848px;width:828px;height:15px;background:#cfcfd3"></div>
<svg style="position:absolute;left:0;top:847px" width="1152" height="17">
 <path d="M24.5,3.5 L18.5,8.5 L24.5,13.5" fill="none" stroke="#231245" stroke-width="1.8"/>
 <path d="M1108.5,3.5 L1114.5,8.5 L1108.5,13.5" fill="none" stroke="#231245" stroke-width="1.8"/>
 <rect x="1133.5" y="0" width="1.6" height="17" fill="#1c0e3c"/>
 <rect x="1138" y="7.5" width="11" height="2.2" fill="#1c0e3c"/>
</svg>

</body></html>
